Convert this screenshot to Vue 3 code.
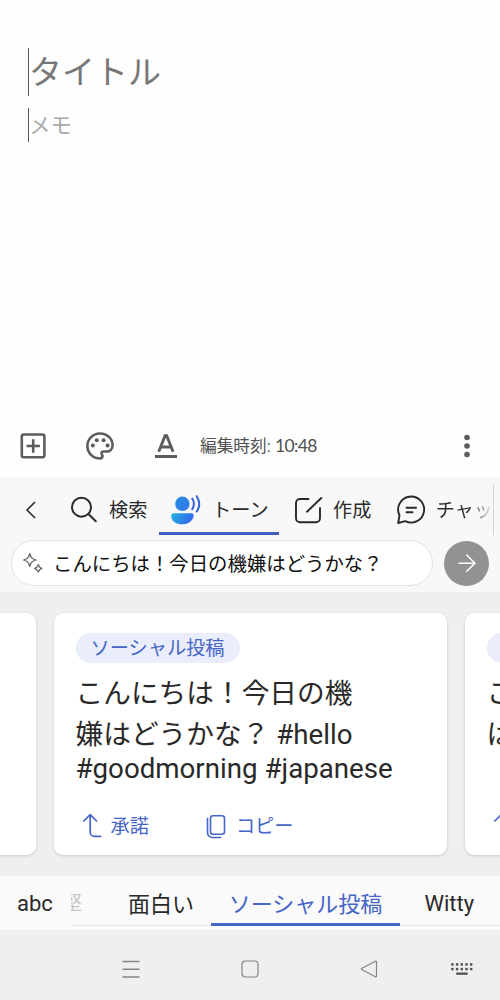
<script setup>
const keys = [0, 1, 2, 3, 4]
</script>

<template>
  <div class="screen">
    <main class="note">
      <div class="title">タイトル</div>
      <div class="memo">メモ</div>
    </main>

    <div class="notebar">
      <svg class="add" width="28" height="28" viewBox="0 0 28 28" fill="none" stroke="#5c5c5c" stroke-width="2.6">
        <rect x="2.8" y="2.5" width="22.6" height="22.8" rx="2" />
        <path d="M7.5 14h13.4M14.2 7.3v13.4" />
      </svg>
      <svg class="palette" width="30" height="30" viewBox="0 0 30 30">
        <path d="M15 2.5C8 2.5 2.4 7.900 2.400 14.900S8 27.500 15 27.500c1.600 0 2.500-1.100 2.500-2.400 0-.7-.3-1.200-.6-1.600-1.100-1.500-.1-3 1.500-3h3.300c3.400 0 5.900-2.600 5.900-6.300C27.600 7.500 22 2.500 15 2.500Z" fill="none" stroke="#5c5c5c" stroke-width="2.600" />
        <g fill="#5c5c5c"><circle cx="7.800" cy="14.600" r="2" /><circle cx="11.800" cy="9.200" r="2" /><circle cx="18.600" cy="9.200" r="2" /><circle cx="22.600" cy="14.600" r="2" /></g>
      </svg>
      <svg class="format" width="24" height="26" viewBox="0 0 24 26">
        <path d="M4.700 18.700 11.100 2.600h1.600l6.400 16.100M7.500 14h8.800" fill="none" stroke="#5c5c5c" stroke-width="2.900" />
        <path d="M1 22h22v3H1z" fill="#5c5c5c" />
      </svg>
      <span class="edited">編集時刻: <span class="time">10:48</span></span>
      <svg class="more" width="8" height="26" viewBox="0 0 8 26" fill="#5c5c5c"><circle cx="4" cy="4.500" r="2.800" /><circle cx="4" cy="13" r="2.800" /><circle cx="4" cy="21.500" r="2.800" /></svg>
    </div>

    <section class="top">
      <nav class="tools">
        <svg class="back" width="12" height="20" viewBox="0 0 12 20" fill="none" stroke="#333" stroke-width="1.700"><path d="M10 2 2 10l8 8" /></svg>
        <div class="tool search">
          <svg width="28" height="28" viewBox="0 0 28 28" fill="none" stroke="#292929" stroke-width="2"><circle cx="11.500" cy="11.200" r="9.500" /><path d="m18.400 18 7.400 7.300" stroke-linecap="round" /></svg>
          <span>検索</span>
        </div>
        <div class="tool tone">
          <svg width="32" height="32" viewBox="0 0 32 32">
            <defs>
              <linearGradient id="head" x1="0" y1="0" x2="1" y2="1"><stop stop-color="#258bdb" /><stop offset="1" stop-color="#3779f1" /></linearGradient>
              <linearGradient id="body" x1="0" y1="0" x2="1" y2=".3"><stop stop-color="#20b4d9" /><stop offset="1" stop-color="#3269ef" /></linearGradient>
            </defs>
            <circle cx="12.400" cy="9.800" r="7.200" fill="url(#head)" />
            <path d="M4 19.200h17.200c2.500 0 3.100 2.200 2 4.500-2.200 4.700-6.200 6.600-10.900 6.600C5.700 30.300 1.200 27 1.200 22c0-1.900 1-2.800 2.800-2.800Z" fill="url(#body)" />
            <g fill="none" stroke="#3563d5" stroke-width="2" stroke-linecap="round"><path d="M22.300 4.500c2 3.500 2 7.500 0 10.600M26.700 2.200c3.300 5 3.300 10.500 0 15.300" /></g>
          </svg>
          <span>トーン</span>
        </div>
        <div class="tool compose">
          <svg width="30" height="28" viewBox="0 0 30 28" fill="none" stroke="#292929" stroke-width="1.900" stroke-linecap="round"><path d="M14.500 3H6a4 4 0 0 0-4 4v15.300a4 4 0 0 0 4 4h16a4 4 0 0 0 4-4V12M13 15.700 27.300 2" /></svg>
          <span>作成</span>
        </div>
        <div class="tool chat">
          <svg width="30" height="30" viewBox="0 0 30 30" fill="none" stroke="#292929" stroke-width="1.900" stroke-linecap="round" stroke-linejoin="round"><path d="M2.200 28 3.500 20.400A13 13 0 1 1 9.300 26.200ZM10.500 12.700h9.600M10.500 17.200h6" /></svg>
          <span>チャッ</span>
        </div>
      </nav>
      <div class="prompt">
        <div class="field">
          <svg width="22" height="22" viewBox="0 0 22 22" fill="none" stroke="#666" stroke-width="1.300" stroke-linejoin="round"><path d="M7.800 1.500C9 5.700 9.800 6.700 14 8c-4.200 1.300-5 2.300-6.200 6.500C6.600 10.300 5.800 9.300 1.600 8 5.800 6.700 6.600 5.700 7.800 1.500ZM16.300 12.700c.8 2.400 1.300 3 3.600 3.700-2.300.8-2.800 1.300-3.600 3.700-.8-2.400-1.300-2.900-3.700-3.700 2.400-.7 2.900-1.300 3.700-3.700Z" /></svg>
          <span>こんにちは！今日の機嫌はどうかな？</span>
        </div>
        <div class="send"><svg width="20" height="20" viewBox="0 0 20 20" fill="none" stroke="#fff" stroke-width="1.500" stroke-linecap="round" stroke-linejoin="round"><path d="M2 10.300h16M9.700 2l8.300 8.300-8.300 8" /></svg></div>
      </div>
    </section>

    <section class="cards">
      <article class="card previous"></article>
      <article class="card current">
        <div class="chip">ソーシャル投稿</div>
        <div class="result">
          <div>こんにちは！今日の機</div>
          <div>嫌はどうかな？ #hello</div>
          <div class="latin">#goodmorning #japanese</div>
        </div>
        <div class="actions">
          <svg class="accept" width="20" height="26" viewBox="0 0 20 26" fill="none" stroke="#4565c8" stroke-width="1.700" stroke-linecap="round" stroke-linejoin="round"><path d="m1.800 8 6.400-6.300L14.600 8M8.200 2v17.400a4 4 0 0 0 4 4h6.300" /></svg>
          <span>承諾</span>
          <svg class="copy" width="20" height="25" viewBox="0 0 20 25" fill="none" stroke="#4565c8" stroke-width="1.600" stroke-linecap="round"><rect x="4.500" y="1.700" width="14" height="18.500" rx="2.500" /><path d="M1.500 4.500v14a5 5 0 0 0 5 5h8" /></svg>
          <span>コピー</span>
        </div>
      </article>
      <article class="card next">
        <div class="chip"></div>
        <div class="result"><div>こ</div><div>は</div><div class="latin">&nbsp;</div></div>
        <div class="actions"><svg class="accept" width="20" height="26" viewBox="0 0 20 26" fill="none" stroke="#4565c8" stroke-width="1.700" stroke-linecap="round" stroke-linejoin="round"><path d="m1.800 8 6.400-6.300L14.600 8M8.200 2v17.400a4 4 0 0 0 4 4h6.300" /></svg></div>
      </article>
    </section>

    <nav class="styles">
      <span class="abc">abc</span>
      <div class="tabs">
        <span class="clipped"><span>堅</span></span>
        <span class="funny">面白い</span>
        <span class="social">ソーシャル投稿</span>
        <span class="witty">Witty</span>
      </div>
    </nav>

    <footer class="system">
      <svg class="menu" width="18" height="18" viewBox="0 0 18 18" stroke="#858585" stroke-width="1.500"><path d="M.5 1.500h17M.5 9.300h17M.5 16.900h17" /></svg>
      <svg class="home" width="18" height="18" viewBox="0 0 18 18" fill="none" stroke="#858585" stroke-width="1.200"><rect x="1" y="1" width="16" height="16" rx="3.500" /></svg>
      <svg class="return" width="18" height="18" viewBox="0 0 18 18" fill="none" stroke="#858585" stroke-width="1.200" stroke-linejoin="round"><path d="M16.500 2v14c0 .8-.5 1-1.100.7L2 9.800c-.8-.4-.8-1.100 0-1.500l13.400-7c.6-.3 1.100 0 1.100.7Z" /></svg>
      <svg class="keyboard" width="24" height="14" viewBox="0 0 24 14" fill="#505050">
        <g v-for="k in keys" :key="k"><rect :x="1.200 + k * 4.700" y="1.200" width="2.400" height="2.400" /><rect :x="1.200 + k * 4.700" y="5.900" width="2.400" height="2.400" /></g>
        <rect x="6.200" y="10.500" width="11.400" height="2.300" />
      </svg>
    </footer>
  </div>
</template>

<style>
body { margin: 0; }
</style>

<style scoped>
.screen { width: 500px; height: 1000px; overflow: hidden; display: flex; flex-direction: column; background: #fefefe; font-family: Roboto, "Noto Sans CJK JP", sans-serif; color: #292929; }
.screen * { box-sizing: border-box; }
svg { display: block; flex: none; }
span { white-space: nowrap; }
.note { height: 412px; padding: 48px 28px 0; flex: none; }
.title { height: 48px; border-left: 1px solid #555; font-size: 33px; line-height: 50px; color: #777; }
.memo { height: 34px; margin-top: 12px; border-left: 1px solid #555; font-size: 21.500px; line-height: 36px; color: #aaa; }
.notebar { height: 66px; flex: none; display: flex; align-items: center; padding: 1px 0 0 19px; }
.palette { margin-left: 38px; }
.format { margin-left: 39px; }
.edited { margin-left: 22px; font-size: 16.700px; line-height: 24px; color: #505050; width: 130px; padding-top: 1px; }
.time { font-family: Lato, sans-serif; font-size: 17.500px; letter-spacing: -.6px; }
.more { margin-left: auto; margin-right: 29.500px; }
.top { height: 114px; flex: none; background: #f8f8f8; border-top: 1px solid #f2f2f2; padding-top: 5px; }
.tools { height: 51px; width: 494px; display: flex; border-right: 1px solid #d2d2d2; overflow: hidden; }
.back { margin: 16px 0 0 25px; }
.tool { display: flex; height: 51px; font-size: 19.200px; }
.tool > span { line-height: 28px; margin-top: 13px; }
.search { margin-left: 33px; width: 89px; }
.search svg { margin-top: 12px; }
.search span { margin-left: 11px; }
.tone { width: 121px; border-bottom: 3px solid #405fc4; padding-left: 11.500px; }
.tone svg { margin-top: 10px; }
.tone span { margin-left: 10px; }
.compose { padding-left: 15px; width: 117px; }
.compose svg { margin-top: 12px; }
.compose span { margin-left: 9px; }
.chat svg { margin-top: 11px; }
.chat span { margin-left: 10px; background: linear-gradient(90deg, #292929 58%, #ccc 92%); background-clip: text; color: transparent; }
.prompt { display: flex; align-items: center; margin: 5px 11px 0; justify-content: space-between; }
.field { width: 422px; height: 46px; border: 1px solid #e2e2e2; border-radius: 23px; background: #fff; display: flex; align-items: center; padding-left: 10px; font-size: 19.400px; color: #111; }
.field span { margin-left: 9px; line-height: 28px; padding-top: 3px; }
.send { width: 45px; height: 45px; border-radius: 50%; background: #929292; display: grid; place-items: center; }
.cards { height: 284px; flex: none; background: #efefef; display: flex; gap: 18px; padding-top: 21px; overflow: hidden; }
.card { height: 242px; flex: none; border-radius: 9px; background: #fff; box-shadow: 0 1px 3px #0000002b; padding: 20px 22px 0; }
.previous { width: 35.500px; padding: 0; border-radius: 0 9px 9px 0; }
.current, .next { width: 393px; }
.chip { width: 164px; height: 30px; border-radius: 15px; background: #eaedfc; color: #4565c8; text-align: center; font-size: 19.200px; line-height: 32px; }
.result { font-size: 27.700px; line-height: 41px; padding-top: 10px; white-space: nowrap; }
.latin { line-height: 35px; margin-top: -4px; }
.actions { display: flex; align-items: center; height: 32px; margin-top: 24px; color: #4565c8; font-size: 19.200px; line-height: 28px; }
.actions span { padding-top: 2px; }
.accept { margin-left: 6px; }
.actions .accept + span { margin-left: 9px; }
.copy { margin-left: 57px; }
.copy + span { margin-left: 10px; }
.styles { height: 54px; flex: none; display: flex; background: #fafafa; font-size: 22px; line-height: 32px; }
.abc { width: 71px; padding: 12px 0 0 17px; }
.tabs { display: flex; flex: 1; height: 50px; border-bottom: 1px solid #e8e8e8; }
.tabs > span { padding-top: 12px; height: 50px; }
.clipped { width: 11px; overflow: hidden; display: flex; justify-content: flex-end; color: #c5c5c5; font-size: 19px; }
.funny { margin-left: 46px; width: 83px; }
.social { width: 189px; text-align: center; color: #4565c8; border-bottom: 3px solid #4565c8; }
.tabs > .funny, .tabs > .social { padding-top: 13px; }
.witty { margin-left: 24.500px; }
.system { flex: 1; background: #efefef; display: flex; align-items: center; }
.menu { margin: 8px 0 0 122px; }
.home { margin: 8px 0 0 101px; }
.return { margin: 8px 0 0 101px; }
.keyboard { margin: 8px 0 0 72px; }
</style>
